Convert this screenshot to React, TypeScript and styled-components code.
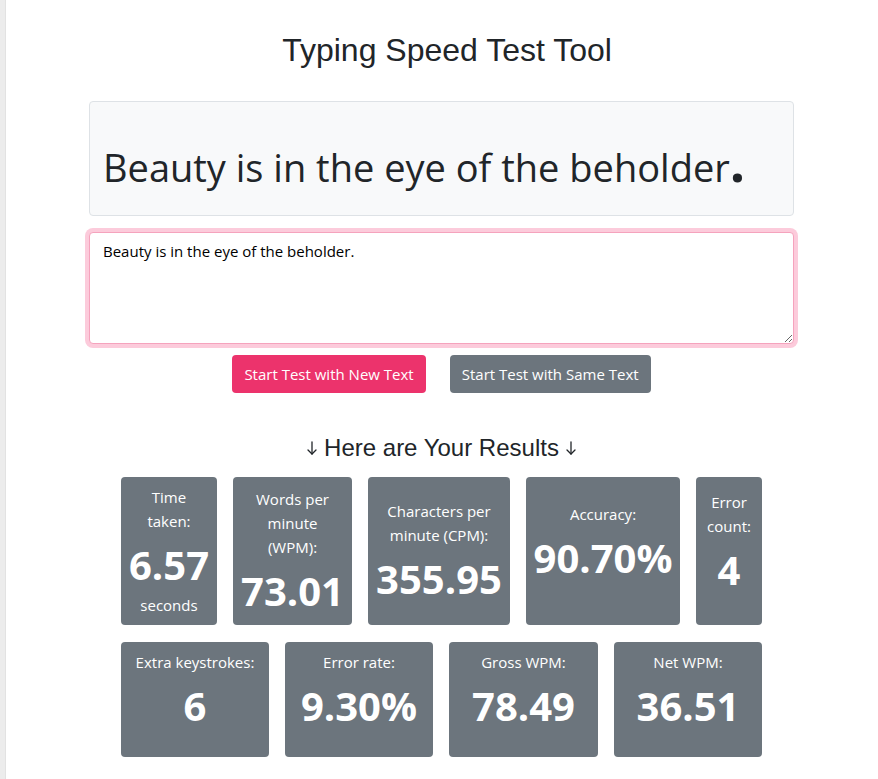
import React, {useEffect, useRef} from "react";
import styled, {createGlobalStyle} from "styled-components";

const GlobalStyle = createGlobalStyle`
  html, body {
    margin: 0;
    padding: 0;
    background: #ffffff;
  }
  body {
    font-family: "Open Sans", "Noto Sans", sans-serif;
    color: #212529;
  }
  * {
    box-sizing: border-box;
  }
`

const SENTENCE = "Beauty is in the eye of the beholder"

type Stat = {
    label: string[]
    value: string
    unit?: string
    width: number
    tail?: boolean
}

const firstRow: Stat[] = [
    {label: ["Time", "taken:"], value: "6.57", unit: "seconds", width: 96},
    {label: ["Words per", "minute", "(WPM):"], value: "73.01", width: 119},
    {label: ["Characters per", "minute (CPM):"], value: "355.95", width: 142},
    {label: ["Accuracy:"], value: "90.70%", width: 154, tail: true},
    {label: ["Error", "count:"], value: "4", width: 66, tail: true},
]

const secondRow: Stat[] = [
    {label: ["Extra keystrokes:"], value: "6", width: 148, tail: true},
    {label: ["Error rate:"], value: "9.30%", width: 148, tail: true},
    {label: ["Gross WPM:"], value: "78.49", width: 149, tail: true},
    {label: ["Net WPM:"], value: "36.51", width: 148, tail: true},
]

function DownArrow() {
    return (
        <ArrowIcon width="12" height="16" viewBox="0 0 12 16" fill="none" stroke="#212529"
                   strokeWidth="1.3" strokeLinecap="round" strokeLinejoin="round">
            <path d="M6 2v12"/>
            <path d="M2 10l4 4 4-4"/>
        </ArrowIcon>
    )
}

function StatCard({stat}: { stat: Stat }) {
    return (
        <Card $width={stat.width} $tail={!!stat.tail}>
            <CardLabel>
                {stat.label.map((line) => (
                    <span key={line}>{line}</span>
                ))}
            </CardLabel>
            <CardValue>{stat.value}</CardValue>
            {stat.unit && <CardUnit>{stat.unit}</CardUnit>}
        </Card>
    )
}

export default function App() {
    const inputRef = useRef<HTMLTextAreaElement>(null)
    const typed = SENTENCE + "."

    useEffect(() => {
        const el = inputRef.current
        if (el) {
            el.focus()
            el.setSelectionRange(typed.length, typed.length)
        }
    }, [typed])

    return (
        <>
            <GlobalStyle/>
            <Page>
                <Container>
                    <Title>Typing Speed Test Tool</Title>
                    <Prompt>
                        <PromptText>
                            {SENTENCE}
                            <Current>.</Current>
                        </PromptText>
                    </Prompt>
                    <Input ref={inputRef} defaultValue={typed} spellCheck={false}/>
                    <ButtonRow>
                        <Button $variant="primary">Start Test with New Text</Button>
                        <Button $variant="secondary">Start Test with Same Text</Button>
                    </ButtonRow>
                    <ResultsTitle>
                        <DownArrow/>
                        <span>Here are Your Results</span>
                        <DownArrow/>
                    </ResultsTitle>
                    <Results>
                        <CardRow>
                            {firstRow.map((s) => <StatCard key={s.value + s.width} stat={s}/>)}
                        </CardRow>
                        <CardRow>
                            {secondRow.map((s) => <StatCard key={s.value + s.width} stat={s}/>)}
                        </CardRow>
                    </Results>
                </Container>
            </Page>
        </>
    )
}

const Page = styled.div`
  min-height: 779px;
  border-left: 5px solid #ececec;
  box-shadow: inset 1px 0 0 #e2e2e2;
  padding-top: 31px;
`
const Container = styled.div`
  width: 705px;
  margin: 0 auto;
  display: flex;
  flex-direction: column;
  align-items: stretch;
`
const Title = styled.h1`
  margin: 0;
  padding-left: 11px;
  font-family: "Liberation Sans", Arial, sans-serif;
  font-weight: 400;
  font-size: 32px;
  line-height: 39px;
  text-align: center;
  color: #212529;
`
const Prompt = styled.div`
  margin-top: 31px;
  height: 115px;
  background-color: #f8f9fa;
  border: 1px solid #dee2e6;
  border-radius: 4px;
  padding: 0 13px 24px;
  display: flex;
  align-items: flex-end;
`
const PromptText = styled.div`
  font-size: 38px;
  line-height: 1.2;
  color: #212529;
  white-space: nowrap;
`
const Current = styled.span`
  font-weight: 700;
  font-size: 54px;
  line-height: 1;
`
const Input = styled.textarea`
  margin-top: 16px;
  height: 112px;
  width: 100%;
  resize: vertical;
  padding: 6px 13px;
  font-family: "Open Sans", "Noto Sans", sans-serif;
  font-size: 15px;
  line-height: 24px;
  color: #000;
  background: #fff;
  border: 1px solid #f5a3bd;
  border-radius: 4px;
  box-shadow: 0 0 0 4px #fccbdb;
  outline: none;
  caret-color: #000;
  &:focus {
    border-color: #f5a3bd;
    box-shadow: 0 0 0 4px #fccbdb;
  }
`
const ButtonRow = styled.div`
  margin-top: 11px;
  display: flex;
  justify-content: center;
  gap: 24px;
`
const Button = styled.button<{ $variant: "primary" | "secondary" }>`
  height: 38px;
  padding: 0 12px;
  border: none;
  border-radius: 4px;
  font-family: "Open Sans", "Noto Sans", sans-serif;
  font-size: 15px;
  color: #ffffff;
  cursor: pointer;
  background-color: ${p => p.$variant === "primary" ? "#ec336c" : "#6c757d"};
`
const ResultsTitle = styled.h3`
  margin: 40px 0 0;
  display: flex;
  justify-content: center;
  align-items: center;
  gap: 6px;
  font-family: "Liberation Sans", Arial, sans-serif;
  font-weight: 400;
  font-size: 24px;
  line-height: 29px;
  color: #212529;
`
const ArrowIcon = styled.svg`
  flex: none;
  margin-top: 1px;
`
const Results = styled.div`
  margin-top: 15px;
  display: flex;
  flex-direction: column;
  gap: 17px;
`
const CardRow = styled.div`
  display: flex;
  justify-content: center;
  align-items: stretch;
  gap: 16px;
`
const Card = styled.div<{ $width: number; $tail: boolean }>`
  width: ${p => p.$width}px;
  flex: none;
  display: flex;
  flex-direction: column;
  justify-content: center;
  align-items: center;
  padding: 8px 6px ${p => p.$tail ? 27 : 8}px;
  background-color: #6c757d;
  border-radius: 4px;
  color: #ffffff;
  text-align: center;
`
const CardLabel = styled.div`
  display: flex;
  flex-direction: column;
  font-size: 15px;
  line-height: 24px;
  white-space: nowrap;
`
const CardValue = styled.div`
  margin-top: 8px;
  font-size: 40px;
  font-weight: 700;
  line-height: 48px;
  white-space: nowrap;
`
const CardUnit = styled.div`
  margin-top: 4px;
  font-size: 15px;
  line-height: 24px;
`
